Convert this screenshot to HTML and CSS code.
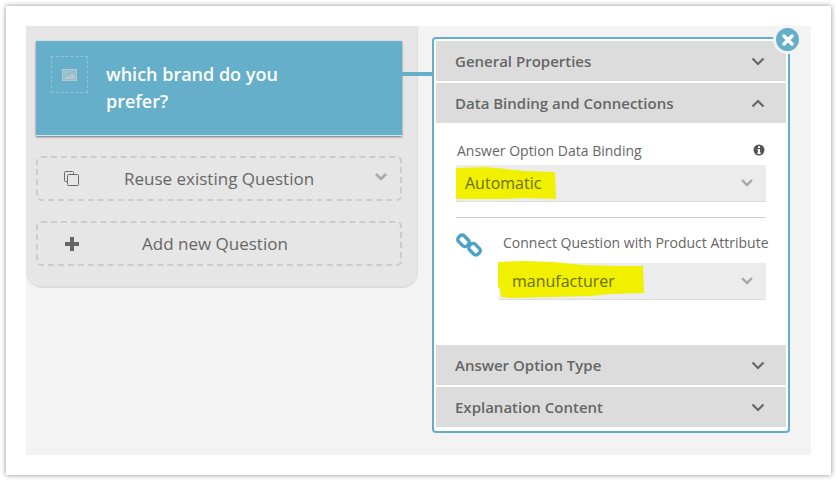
FILE: index.html
```html
<!DOCTYPE html>
<html lang="en">
<head>
    <meta charset="UTF-8">
    <title>Question Editor</title>
    <link rel="stylesheet" href="styles.css">
</head>
<body>
    <div class="frame">
        <div class="canvas">
            <section class="questions">
                <div class="question-card">
                    <div class="image-slot">
                        <svg width="15" height="12" viewBox="0 0 15 12"><rect width="15" height="12" fill="#8fbfd1"/><path fill="#bcc6ca" fill-rule="evenodd" d="M0 0h15v12H0zM1 1v10h13V1zM2 10l3-4 2 2 3-4 3 3v3zM4 2a1.300 1.300 0 1 1 0 2.600 1.300 1.300 0 0 1 0-2.600z"/></svg>
                    </div>
                    <div class="question-title">which brand do you prefer?</div>
                </div>
                <div class="dashed-btn reuse">
                    <svg class="btn-icon" width="15" height="15" viewBox="0 0 15 15"><path fill="none" stroke="#6b6b6b" stroke-width="1" d="M3.500 10.500h-2a1 1 0 0 1-1-1v-8a1 1 0 0 1 1-1h7a1 1 0 0 1 1 1v2M4.500 3.500h9a1 1 0 0 1 1 1v9a1 1 0 0 1-1 1h-9a1 1 0 0 1-1-1v-9a1 1 0 0 1 1-1z"/></svg>
                    <span class="btn-label">Reuse existing Question</span>
                    <svg class="btn-chevron" width="12" height="8" viewBox="0 0 12 8"><path fill="none" stroke="#a8a8a8" stroke-width="2.600" d="M1 1l5 5 5-5"/></svg>
                </div>
                <div class="dashed-btn add">
                    <svg class="btn-icon" width="14" height="14" viewBox="0 0 14 14"><path fill="#666" d="M5 0h4v5h5v4H9v5H5V9H0V5h5z"/></svg>
                    <span class="btn-label">Add new Question</span>
                </div>
            </section>

            <div class="connector"></div>

            <section class="props">
                <div class="close-btn">
                    <svg width="12" height="12" viewBox="0 0 12 12"><path stroke="#fff" stroke-width="3.400" stroke-linecap="round" d="M2 2l8 8M10 2l-8 8"/></svg>
                </div>

                <div class="acc-header">
                    <span>General Properties</span>
                    <svg width="14" height="9" viewBox="0 0 14 9"><path fill="none" stroke="#666" stroke-width="2.200" d="M1.500 1.500L7 7l5.500-5.500"/></svg>
                </div>
                <div class="acc-header">
                    <span>Data Binding and Connections</span>
                    <svg width="14" height="9" viewBox="0 0 14 9"><path fill="none" stroke="#666" stroke-width="2.200" d="M1.500 7.500L7 2l5.500 5.500"/></svg>
                </div>

                <div class="acc-body">
                    <div class="field-label">
                        <span>Answer Option Data Binding</span>
                        <svg width="12" height="12" viewBox="0 0 12 12"><circle cx="6" cy="6" r="5.500" fill="#555"/><path fill="#fff" d="M5 2.200h2v1.700H5zM4.600 5h2.400v3.600h.7V10H4.400V8.600H5V6.300h-.4z"/></svg>
                    </div>
                    <div class="select">
                        <svg class="marker marker-a" width="102" height="34" viewBox="0 0 102 34"><path fill="#f0f000" d="M1 2l30-1 20 2 18 2 31 1 1 27-32-1-20 1-30 0L3 33 1 32z"/></svg>
                        <span class="select-value">Automatic</span>
                        <svg width="12" height="8" viewBox="0 0 12 8"><path fill="none" stroke="#a8a8a8" stroke-width="2.400" d="M1 1l5 5 5-5"/></svg>
                    </div>
                    <hr class="divider">
                    <div class="connect">
                        <svg class="link-icon" width="26" height="26" viewBox="0 0 26 26"><g fill="none" stroke="#4ba3c6" stroke-width="3.400"><rect x="1.500" y="4.800" width="12" height="8" rx="3.200" transform="rotate(45 7.500 8.800)"/><rect x="12.500" y="13.200" width="12" height="8" rx="3.200" transform="rotate(45 18.500 17.200)"/></g></svg>
                        <div class="connect-main">
                            <div class="connect-label">Connect Question with Product Attribute</div>
                            <div class="select">
                                <svg class="marker marker-b" width="146" height="37" viewBox="0 0 146 37"><path fill="#f0f000" d="M0 1l25-1 30 1 30 3 34 1 26 0 1 27-34 1-20 2-40 1-38 1-11-1-1-9-2-1z"/></svg>
                                <span class="select-value">manufacturer</span>
                                <svg width="12" height="8" viewBox="0 0 12 8"><path fill="none" stroke="#a8a8a8" stroke-width="2.400" d="M1 1l5 5 5-5"/></svg>
                            </div>
                        </div>
                    </div>
                </div>

                <div class="acc-header">
                    <span>Answer Option Type</span>
                    <svg width="14" height="9" viewBox="0 0 14 9"><path fill="none" stroke="#666" stroke-width="2.200" d="M1.500 1.500L7 7l5.500-5.500"/></svg>
                </div>
                <div class="acc-header">
                    <span>Explanation Content</span>
                    <svg width="14" height="9" viewBox="0 0 14 9"><path fill="none" stroke="#666" stroke-width="2.200" d="M1.500 1.500L7 7l5.500-5.500"/></svg>
                </div>
            </section>
        </div>
    </div>
</body>
</html>
```

FILE: styles.css
```css
/* General */
html, body {
    margin: 0;
    padding: 0;
    height: 481px;
    overflow: hidden;
    background-color: #fff;
    font-family: "Open Sans", sans-serif;
    color: #666;
}

.frame {
    box-sizing: border-box;
    width: 825px;
    height: 469px;
    margin: 6px;
    padding: 20px;
    background-color: #fff;
    box-shadow: 0 0 5px rgba(0, 0, 0, 0.45);
}

.canvas {
    position: relative;
    display: flex;
    align-items: flex-start;
    height: 429px;
    background-color: #f3f3f3;
}

/* Left column */
.questions {
    box-sizing: border-box;
    width: 392px;
    height: 262px;
    margin-right: 14px;
    padding: 15px 15px 0 10px;
    background-color: #e6e6e6;
    border-right: 1px solid #ddd;
    border-bottom: 2px solid #ddd;
    border-bottom-left-radius: 16px;
    border-bottom-right-radius: 16px;
}

.question-card {
    display: flex;
    box-sizing: border-box;
    height: 95px;
    padding: 15px 15px 0;
    background-color: #65afca;
    box-shadow: 0 1px 2px rgba(0, 0, 0, 0.5);
    border-bottom: 1px solid #d0e6ee;
}

.image-slot {
    display: flex;
    flex: none;
    align-items: center;
    justify-content: center;
    box-sizing: border-box;
    width: 37px;
    height: 37px;
    margin-right: 18px;
    border: 1px dashed #93c4d6;
}

.question-title {
    width: 200px;
    padding-top: 5px;
    color: #fff;
    font-size: 18px;
    font-weight: 600;
    line-height: 27px;
}

.dashed-btn {
    position: relative;
    display: flex;
    align-items: center;
    box-sizing: border-box;
    height: 45px;
    margin-top: 20px;
    border: 2px dashed #ccc;
    border-radius: 5px;
    font-size: 17px;
}

.btn-icon {
    flex: none;
    margin-left: 26px;
}

.reuse .btn-label {
    margin-left: 45px;
}

.add .btn-label {
    margin-left: 63px;
}

.add .btn-icon {
    margin-left: 27px;
}

.btn-chevron {
    margin-left: auto;
    margin-right: 13px;
    margin-top: -3px;
}

.connector {
    position: absolute;
    left: 376px;
    top: 46px;
    width: 32px;
    height: 4px;
    background-color: #65afca;
}

/* Right column */
.props {
    position: relative;
    box-sizing: border-box;
    width: 358px;
    height: 396px;
    margin-top: 11px;
    padding: 2px;
    background-color: #fff;
    border: 2px solid #64aecb;
    border-radius: 4px;
}

.close-btn {
    position: absolute;
    top: -14px;
    right: -14px;
    display: flex;
    align-items: center;
    justify-content: center;
    box-sizing: content-box;
    width: 23px;
    height: 23px;
    background-color: #65afca;
    border: 3px solid #f3f3f3;
    border-radius: 50%;
}

.acc-header {
    display: flex;
    align-items: center;
    justify-content: space-between;
    box-sizing: border-box;
    height: 40px;
    margin-bottom: 2px;
    padding: 0 21px 0 19px;
    background-color: #dcdcdc;
    font-size: 15px;
    font-weight: 600;
}

.acc-body {
    box-sizing: border-box;
    height: 220px;
    padding: 14px 20px 0;
}

.field-label {
    display: flex;
    align-items: center;
    justify-content: space-between;
    height: 26px;
    padding: 0 1px 4px;
    box-sizing: border-box;
    font-size: 14px;
}

.select {
    position: relative;
    display: flex;
    align-items: center;
    justify-content: space-between;
    box-sizing: border-box;
    height: 37px;
    padding: 0 13px 0 9px;
    background-color: #ececec;
    border-bottom: 1px solid #ddd;
    font-size: 16px;
}

.select-value {
    position: relative;
    color: #6d6d00;
}

.connect-main .select {
    padding-left: 13px;
}

/* Yellow marker scribbled over the screenshot */
.marker {
    position: absolute;
}

.marker-a {
    left: -1px;
    top: 1px;
}

.marker-b {
    left: -1px;
    top: -2px;
}

.divider {
    margin: 15px 0 0;
    border: 0;
    border-top: 1px solid #ccc;
}

.connect {
    display: flex;
    margin-top: 14px;
}

.link-icon {
    flex: none;
}

.connect-main {
    flex: 1;
    min-width: 0;
    margin-left: 17px;
}

.connect-label {
    height: 31px;
    margin-left: 4px;
    margin-right: -10px;
    font-size: 14px;
    line-height: 22px;
    white-space: nowrap;
}
```
